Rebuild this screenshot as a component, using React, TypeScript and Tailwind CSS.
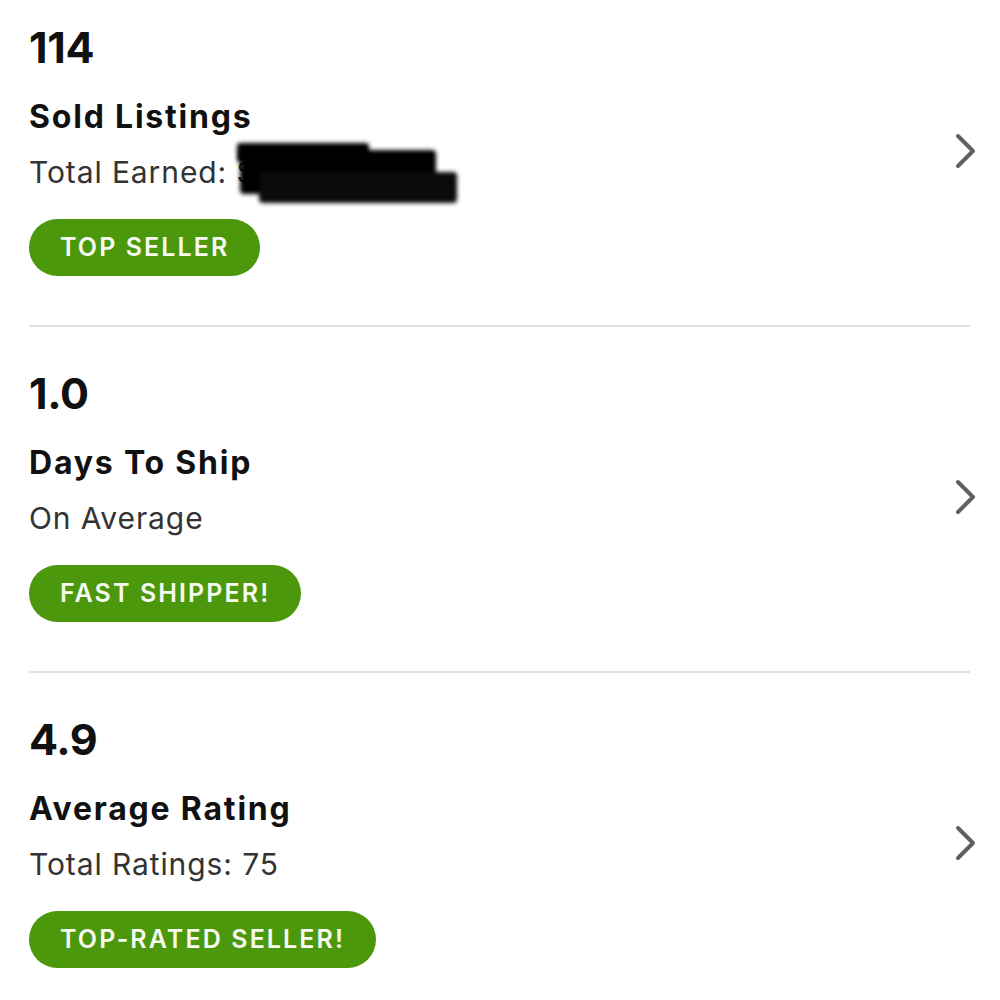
type Stat = {
  value: string;
  title: string;
  sub: string;
  badge: string;
  redacted?: boolean;
};

const stats: Stat[] = [
  { value: "114", title: "Sold Listings", sub: "Total Earned: $", badge: "TOP SELLER", redacted: true },
  { value: "1.0", title: "Days To Ship", sub: "On Average", badge: "FAST SHIPPER!" },
  { value: "4.9", title: "Average Rating", sub: "Total Ratings: 75", badge: "TOP-RATED SELLER!" },
];

// marker-style redaction over the earnings amount
const Scribble = () => (
  <>
    <span className="absolute left-[208px] top-[-9px] w-[132px] h-[19px] bg-black rounded-[3px] blur-[2px]" />
    <span className="absolute left-[211px] top-[-2px] w-[196px] h-[44px] bg-black rounded-[4px] blur-[2px]" />
    <span className="absolute left-[230px] top-[20px] w-[198px] h-[31px] bg-[#0a0a0a] rounded-[4px] blur-[2px]" />
  </>
);

const Chevron = () => (
  <svg width="24" height="36" viewBox="0 0 24 36" className="mr-[-8px] shrink-0">
    <polyline
      points="4,3 19,18 4,33"
      fill="none"
      stroke="#606060"
      strokeWidth="4"
      strokeLinecap="round"
      strokeLinejoin="round"
    />
  </svg>
);

function StatRow({ stat }: { stat: Stat }) {
  return (
    <div className="flex items-center justify-between">
      <div className="flex flex-col items-start">
        <div className="text-[43px] leading-[44px] font-bold text-[#111] tracking-[-0.3px]">
          {stat.value}
        </div>
        <div className="mt-[28px] text-[32px] leading-[40px] font-bold text-[#111] tracking-[1.8px]">
          {stat.title}
        </div>
        <div className="relative mt-[15px] text-[30px] leading-[40px] text-[#333] whitespace-nowrap tracking-[0.9px]">
          {stat.sub}
          {stat.redacted && <Scribble />}
        </div>
        <div className="mt-[27px] h-[57px] flex items-center px-[31px] rounded-full bg-[#4b980c] text-[#f6faf0] text-[25px] font-semibold tracking-[2.1px]">
          {stat.badge}
        </div>
      </div>
      <Chevron />
    </div>
  );
}

export default function App() {
  return (
    <div className="w-[1000px] h-[1000px] bg-white overflow-hidden" style={{ fontFamily: "Inter, 'Noto Sans', sans-serif" }}>
      <div className="pl-[29px] pr-[30px] pt-[25px]">
        {stats.map((s, i) => (
          <div key={s.title}>
            {i > 0 && <div className="h-[2px] bg-[#e2e2e2] mt-[49px] mb-[44px]" />}
            <StatRow stat={s} />
          </div>
        ))}
      </div>
    </div>
  );
}
